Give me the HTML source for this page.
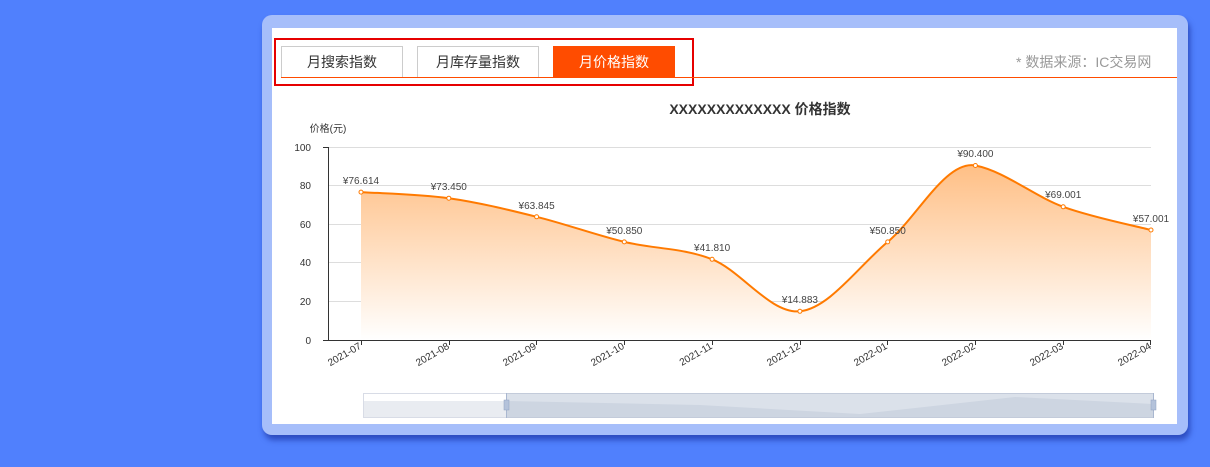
<!DOCTYPE html>
<html><head><meta charset="utf-8"><style>
*{margin:0;padding:0;box-sizing:border-box}
body{width:1210px;height:467px;background:#5080fd;position:relative;overflow:hidden;font-family:"Liberation Sans","Noto Sans CJK SC",sans-serif}
.panel{position:absolute;left:262px;top:15px;width:926px;height:420px;background:#a6befa;border-radius:10px;box-shadow:2px 5px 6px rgba(20,40,150,.6)}
.inner{position:absolute;left:272px;top:28px;width:905px;height:396px;background:#fff}
.red{position:absolute;left:274px;top:38px;width:420px;height:48px;border:2px solid #e60000}
.tab{position:absolute;top:46px;width:122px;height:31px;border:1px solid #ccc;border-bottom:none;font-size:14px;color:#333;text-align:center;line-height:31px;background:#fff}
.tab.on{background:#ff4c00;color:#fff;border-color:#ff4c00}
.oline{position:absolute;left:281px;top:77px;width:896px;height:1px;background:#ff4c00}
.src{position:absolute;left:1016px;top:52px;font-size:14px;color:#999}
</style></head><body>
<div class="panel"></div>
<div class="inner"></div>
<div class="red"></div>
<div class="tab" style="left:281px">月搜索指数</div>
<div class="tab" style="left:417px">月库存量指数</div>
<div class="tab on" style="left:553px">月价格指数</div>
<div class="oline"></div>
<div class="src">* 数据来源：IC交易网</div>
<svg width="1210" height="467" style="position:absolute;left:0;top:0" font-family="Liberation Sans,Noto Sans CJK SC,sans-serif">
<defs><linearGradient id="g" gradientUnits="userSpaceOnUse" x1="0" y1="165" x2="0" y2="340"><stop offset="0" stop-color="#ffbf85"/><stop offset="1" stop-color="#fff"/></linearGradient></defs>
<text x="760" y="114" font-size="14" font-weight="bold" fill="#333" text-anchor="middle">XXXXXXXXXXXXX 价格指数</text>
<text x="328" y="132" font-size="10" fill="#333" text-anchor="middle">价格(元)</text>
<g stroke="#ddd" stroke-width="1">
<line x1="328" x2="1151" y1="147.5" y2="147.5"/><line x1="328" x2="1151" y1="185.5" y2="185.5"/><line x1="328" x2="1151" y1="224.5" y2="224.5"/><line x1="328" x2="1151" y1="262.5" y2="262.5"/><line x1="328" x2="1151" y1="301.5" y2="301.5"/></g>
<g font-size="10" fill="#333" text-anchor="end">
<text x="311" y="151">100</text><text x="311" y="189">80</text><text x="311" y="228">60</text><text x="311" y="266">40</text><text x="311" y="305">20</text><text x="311" y="344">0</text></g>
<path d="M361,192.1 C375.6,193.1 419.5,194.1 448.8,198.2 C478.1,202.3 507.4,209.5 536.6,216.8 C565.9,224.1 595.1,234.8 624.3,241.9 C653.6,249 682.8,247.7 712.1,259.3 C741.4,270.9 770.6,314.2 799.9,311.3 C829.2,308.4 858.5,266.2 887.7,241.9 C916.9,217.6 946.2,159.7 975.4,165.5 C1004.6,171.3 1033.9,196 1063.2,206.8 C1092.5,217.5 1136.4,226.1 1151,230 L1151,340 L361,340 Z" fill="url(#g)"/>
<path d="M361,192.1 C375.6,193.1 419.5,194.1 448.8,198.2 C478.1,202.3 507.4,209.5 536.6,216.8 C565.9,224.1 595.1,234.8 624.3,241.9 C653.6,249 682.8,247.7 712.1,259.3 C741.4,270.9 770.6,314.2 799.9,311.3 C829.2,308.4 858.5,266.2 887.7,241.9 C916.9,217.6 946.2,159.7 975.4,165.5 C1004.6,171.3 1033.9,196 1063.2,206.8 C1092.5,217.5 1136.4,226.1 1151,230" fill="none" stroke="#ff7a00" stroke-width="2"/>
<g fill="#fff" stroke="#ff7a00" stroke-width="1">
<circle cx="361" cy="192.1" r="2"/><circle cx="448.8" cy="198.2" r="2"/><circle cx="536.6" cy="216.8" r="2"/><circle cx="624.3" cy="241.9" r="2"/><circle cx="712.1" cy="259.3" r="2"/><circle cx="799.9" cy="311.3" r="2"/><circle cx="887.7" cy="241.9" r="2"/><circle cx="975.4" cy="165.5" r="2"/><circle cx="1063.2" cy="206.8" r="2"/><circle cx="1151" cy="230" r="2"/></g>
<g font-size="10" fill="#444" text-anchor="middle">
<text x="361" y="184">¥76.614</text><text x="448.8" y="190">¥73.450</text><text x="536.6" y="209">¥63.845</text><text x="624.3" y="234">¥50.850</text><text x="712.1" y="251">¥41.810</text><text x="799.9" y="303">¥14.883</text><text x="887.7" y="234">¥50.850</text><text x="975.4" y="157">¥90.400</text><text x="1063.2" y="198">¥69.001</text><text x="1151" y="222">¥57.001</text></g>
<line x1="328.5" y1="147" x2="328.5" y2="340" stroke="#333"/>
<line x1="323" y1="147.5" x2="328" y2="147.5" stroke="#333"/>
<line x1="323" y1="340.5" x2="1151" y2="340.5" stroke="#333"/>
<g stroke="#333"><line x1="361.5" y1="340" x2="361.5" y2="345"/><line x1="449.5" y1="340" x2="449.5" y2="345"/><line x1="536.5" y1="340" x2="536.5" y2="345"/><line x1="624.5" y1="340" x2="624.5" y2="345"/><line x1="712.5" y1="340" x2="712.5" y2="345"/><line x1="800.5" y1="340" x2="800.5" y2="345"/><line x1="887.5" y1="340" x2="887.5" y2="345"/><line x1="975.5" y1="340" x2="975.5" y2="345"/><line x1="1063.5" y1="340" x2="1063.5" y2="345"/><line x1="1150.5" y1="340" x2="1150.5" y2="345"/></g>
<g font-size="10" fill="#333" text-anchor="end">
<text transform="translate(362,348) rotate(-30)">2021-07</text>
<text transform="translate(450,348) rotate(-30)">2021-08</text>
<text transform="translate(537,348) rotate(-30)">2021-09</text>
<text transform="translate(625,348) rotate(-30)">2021-10</text>
<text transform="translate(713,348) rotate(-30)">2021-11</text>
<text transform="translate(801,348) rotate(-30)">2021-12</text>
<text transform="translate(888,348) rotate(-30)">2022-01</text>
<text transform="translate(976,348) rotate(-30)">2022-02</text>
<text transform="translate(1064,348) rotate(-30)">2022-03</text>
<text transform="translate(1152,348) rotate(-30)">2022-04</text></g>
<rect x="363.5" y="393.5" width="790" height="24" fill="#fff" stroke="#d8dce6"/>
<path d="M364,401 L506,401 L700,405 L860,414 L1015,397 L1153,404 L1153,417 L364,417 Z" fill="#e9ecf1"/>
<rect x="506" y="393" width="648" height="25" fill="rgba(160,175,200,.38)"/>
<line x1="506.5" y1="393" x2="506.5" y2="418" stroke="#a9b7d0"/>
<line x1="1153.5" y1="393" x2="1153.5" y2="418" stroke="#a9b7d0"/>
<rect x="504" y="400" width="5" height="10" fill="#b4c2da" stroke="#8fa0c0" stroke-width=".5"/>
<rect x="1151" y="400" width="5" height="10" fill="#b4c2da" stroke="#8fa0c0" stroke-width=".5"/>
</svg>
</body></html>
